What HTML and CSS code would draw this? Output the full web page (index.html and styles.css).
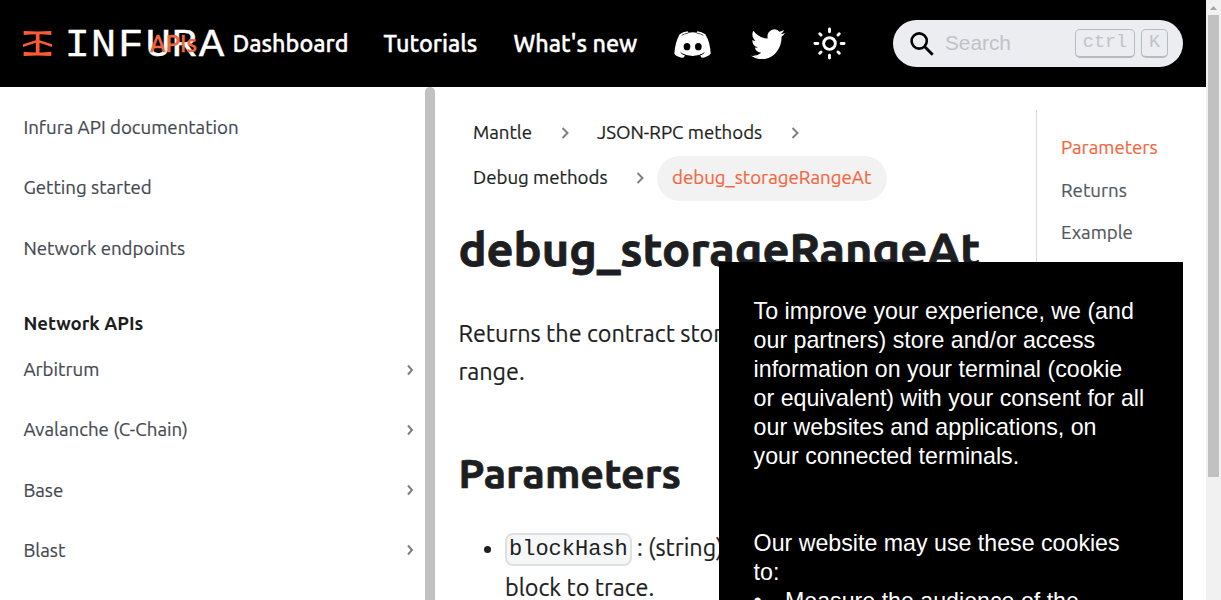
FILE: index.html
```html
<!DOCTYPE html>
<html lang="en">
<head>
<meta charset="utf-8">
<title>debug_storageRangeAt | INFURA</title>
<link rel="stylesheet" href="styles.css">
</head>
<body>
<div class="page">
  <header class="navbar">
    <a class="brand">
      <svg class="brand-mark" viewBox="69 92 86 76" preserveAspectRatio="none"><path d="M71 92Q112 95 153 92V104Q135 102 118 102V120L155 132V141L118 128V157Q137 157 153 155V168Q112 165 71 168V155Q87 157 107 157V128L69 141V132L107 120V102Q89 102 71 104Z" fill="#ff5a36"/></svg>
      <svg class="brand-name" viewBox="0 0 164 30"><text transform="scale(1.12 1)" x="-1.3 22 46.5 71 94.1 118.6" y="27">INFURA</text></svg>
    </a>
    <nav class="links">
      <a class="apis">APIs</a>
      <a class="dash">Dashboard</a>
      <a class="tuts">Tutorials</a>
      <a class="news">What's new</a>
    </nav>
    <svg class="discord" viewBox="43 60 111 81"><path fill="#fff" d="M60 70Q70 62 84 61L86 65Q99 63 111 65L113 61Q126 63 137 70Q152 95 153 128Q142 139 126 140L121 133Q128 131 132 127Q116 135 99 135Q81 135 66 127Q70 131 77 133L71 140Q52 139 44 128Q46 95 60 70Z"/><path d="M66 73Q74 68 86 66M131 73Q123 68 111 66" fill="none" stroke="#000" stroke-width="2"/><path d="M63 125Q69 130 78 133M134 125Q128 130 120 133" fill="none" stroke="#000" stroke-width="2.5"/><ellipse cx="82" cy="107" rx="10" ry="11"/><ellipse cx="116" cy="107" rx="10" ry="11"/></svg>
    <svg class="twitter" viewBox="0 2 24 19.6" preserveAspectRatio="none"><path fill="#fff" d="M23.953 4.57a10 10 0 01-2.825.775 4.958 4.958 0 002.163-2.723c-.951.555-2.005.959-3.127 1.184a4.92 4.92 0 00-8.384 4.482C7.69 8.095 4.067 6.13 1.64 3.162a4.822 4.822 0 00-.666 2.475c0 1.71.87 3.213 2.188 4.096a4.904 4.904 0 01-2.228-.616v.06a4.923 4.923 0 003.946 4.827 4.996 4.996 0 01-2.212.085 4.936 4.936 0 004.604 3.417 9.867 9.867 0 01-6.102 2.105c-.39 0-.779-.023-1.17-.067a13.995 13.995 0 007.557 2.209c9.053 0 13.998-7.496 13.998-13.985 0-.21 0-.42-.015-.63A9.935 9.935 0 0024 4.59z"/></svg>
    <svg class="sun" viewBox="0 0 24 24" fill="none" stroke="#fff" stroke-width="2" stroke-linecap="round"><circle cx="12" cy="12" r="4"/><path d="M12 2v2M12 20v2M2 12h2M20 12h2M5.3 5.3l.9.9M17.8 17.8l.9.9M18.7 5.3l-.9.9M6.2 17.8l-.9.9"/></svg>
    <div class="search">
      <svg class="lens" viewBox="0 0 24 24" fill="none" stroke="#000" stroke-width="2.6"><circle cx="9.2" cy="9" r="7.6"/><path d="M14.5 14.5L22.7 22.7" stroke-width="2.9"/></svg>
      <span class="placeholder">Search</span>
      <kbd class="ctrl">ctrl</kbd><kbd class="key">K</kbd>
    </div>
  </header>
  <div class="body">
    <aside class="sidebar">
      <a class="item">Infura API documentation</a>
      <a class="item">Getting started</a>
      <a class="item">Network endpoints</a>
      <div class="group">Network APIs</div>
      <a class="item">Arbitrum<svg class="caret" viewBox="0 0 8 12"><path d="M2 1.5L6 6L2 10.5"/></svg></a>
      <a class="item">Avalanche (C-Chain)<svg class="caret" viewBox="0 0 8 12"><path d="M2 1.5L6 6L2 10.5"/></svg></a>
      <a class="item">Base<svg class="caret" viewBox="0 0 8 12"><path d="M2 1.5L6 6L2 10.5"/></svg></a>
      <a class="item">Blast<svg class="caret" viewBox="0 0 8 12"><path d="M2 1.5L6 6L2 10.5"/></svg></a>
    </aside>
    <div class="side-scroll"></div>
    <main class="content">
      <div class="crumbs">
        <div class="crumb-row"><span class="c1">Mantle</span><svg class="sep" viewBox="0 0 8 12"><path d="M1.5 1L6.5 6L1.5 11"/></svg><span class="c2">JSON-RPC methods</span><svg class="sep" viewBox="0 0 8 12"><path d="M1.5 1L6.5 6L1.5 11"/></svg></div>
        <div class="crumb-row"><span class="c3">Debug methods</span><svg class="sep" viewBox="0 0 8 12"><path d="M1.5 1L6.5 6L1.5 11"/></svg><span class="current">debug_storageRangeAt</span></div>
      </div>
      <h1>debug_storageRangeAt</h1>
      <p class="intro">Returns the contract storage<br>range.</p>
      <h2>Parameters</h2>
      <ul class="params"><li><code>blockHash</code>: (string)<br>block to trace.</li></ul>
    </main>
    <aside class="toc">
      <a class="active">Parameters</a>
      <a>Returns</a>
      <a>Example</a>
    </aside>
  </div>
</div>
<div class="page-scroll"><svg viewBox="0 0 15 15"><path d="M4 10L7.5 6L11 10Z" fill="#a3a3a3"/></svg><div class="thumb"></div></div>
<section class="cookie">
  <p>To improve your experience, we (and<br>our partners) store and/or access<br>information on your terminal (cookie<br>or equivalent) with your consent for all<br>our websites and applications, on<br>your connected terminals.</p>
  <p class="uses">Our website may use these cookies<br>to:</p>
  <div class="use"><span class="bullet">•</span>Measure the audience of the</div>
</section>
</body>
</html>
```
FILE: styles.css
```css
* { box-sizing: border-box; }
body { margin: 0; width: 1221px; height: 600px; overflow: hidden; display: flex; background: #fff; color: #1c1e21; font-family: Ubuntu, "Noto Sans", sans-serif; }
svg { display: block; flex: none; }
.page { width: 1206px; height: 600px; overflow: hidden; }
.navbar { height: 87px; background: #000; display: flex; align-items: center; padding-left: 23px; }
.brand { display: flex; align-items: center; width: 127px; flex: none; }
.brand-mark { width: 29px; height: 25px; }
.brand-name { width: 164px; height: 30px; margin-left: 14px; overflow: visible; }
.brand-name text { font: 38px "Liberation Mono", monospace; fill: #fff; stroke: #fff; stroke-width: .3px; }
.links { display: flex; width: 524px; flex: none; position: relative; font-size: 23.4px; line-height: 28px; font-weight: 500; color: #fff; white-space: nowrap; padding-bottom: 1px; -webkit-text-stroke: .35px; }
.apis { width: 82.5px; color: #f0683f; }
.dash { width: 151px; }
.tuts { width: 130px; }
.discord { width: 37px; height: 27px; margin-top: 1px; }
.twitter { width: 34px; height: 30px; margin-left: 40px; margin-top: 1px; }
.sun { width: 35px; height: 35px; margin-left: 27px; }
.search { width: 290px; height: 47px; margin-left: 46px; border-radius: 24px; background: #ebedf0; display: flex; align-items: center; padding-left: 17px; color: #bec3c9; }
.lens { width: 24px; height: 24px; }
.placeholder { font: 20.8px "Liberation Sans", sans-serif; margin-left: 11px; width: 130px; padding-bottom: 1px; }
kbd { height: 29px; border: 1px solid #b4bbc2; border-bottom-width: 2px; border-radius: 5px; font: 18.5px/26px "Liberation Mono", monospace; text-align: center; }
.ctrl { width: 60px; }
.key { width: 27px; margin-left: 6px; }
.body { display: flex; height: 513px; -webkit-text-stroke: .2px; }
.sidebar { width: 425px; flex: none; padding: 10.3px 11px 0 23.4px; font-size: 18.7px; color: #444950; }
.item { height: 60.3px; display: flex; align-items: center; justify-content: space-between; }
.group { height: 61.2px; display: flex; align-items: flex-end; padding-bottom: 4.7px; font-size: 18.6px; font-weight: 700; color: #1c1e21; line-height: 23px; -webkit-text-stroke: 0; }
.caret { width: 8px; height: 12px; }
.caret path, .sep path { fill: none; stroke: #808080; stroke-width: 2; }
.side-scroll { width: 10px; flex: none; background: #c1c1c1; border-radius: 5px 5px 0 0; }
.content { width: 601px; flex: none; padding: 24px 0 0 23.4px; white-space: nowrap; }
.crumbs { padding-left: 14.6px; font-size: 18.72px; line-height: 22px; }
.crumb-row { height: 45px; display: flex; align-items: center; padding-bottom: 2px; }
.c1 { width: 88px; }
.c2 { width: 194px; margin-left: 28px; }
.c3 { width: 163px; }
.sep { width: 8px; height: 12px; margin-top: 1px; }
.current { width: 230px; height: 45px; margin: 2px 0 0 13px; padding: 0 0 2px 15px; border-radius: 23px; background: #f2f2f2; color: #f0683f; display: flex; align-items: center; }
h1 { margin: 19px 0 0; font-size: 47px; line-height: 58px; font-weight: 700; -webkit-text-stroke: .8px; }
.intro { margin: 36px 0 0; font-size: 23.4px; line-height: 38px; }
h2 { margin: 56px 0 0; font-size: 41.1px; line-height: 54px; font-weight: 700; -webkit-text-stroke: .7px; }
.params { margin: 28px 0 0; padding-left: 46.6px; font-size: 23.4px; line-height: 39.5px; }
code { display: inline-block; height: 33px; width: 127px; border: 2px solid #dfe0e2; border-radius: 8px; background: #f6f7f8; font: 22px/29px "Liberation Mono", monospace; vertical-align: 1px; padding-left: 2px; margin-right: 5px; -webkit-text-stroke: 0; }
.toc { height: 400px; width: 146px; flex: none; margin-top: 23px; border-left: 1px solid #dadde1; padding: 17px 0 0 24px; font-size: 18.7px; line-height: 42.5px; color: #525860; display: flex; flex-direction: column; }
.active { color: #f0683f; }
.page-scroll { width: 15px; height: 600px; background: #f1f1f1; padding-left: 2px; }
.page-scroll svg { width: 15px; height: 15px; margin-left: -2px; }
.thumb { width: 11px; height: 462px; background: #c1c1c1; }
.cookie { position: absolute; left: 719px; top: 262px; width: 464px; height: 338px; overflow: hidden; background: #000; color: #fff; padding: 35px 0 0 34.6px; font: 23.2px/29px "Liberation Sans", sans-serif; white-space: nowrap; }
.cookie p { margin: 0; }
.cookie .uses { margin-top: 58px; }
.use { display: flex; }
.bullet { width: 31.4px; }
```
